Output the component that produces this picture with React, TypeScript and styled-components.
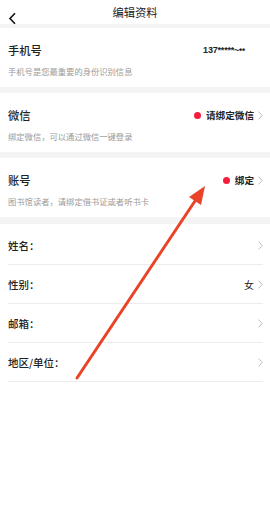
import * as React from 'react';
import styled, { createGlobalStyle } from 'styled-components';

const GlobalStyle = createGlobalStyle`
  html, body {
    margin: 0;
    padding: 0;
    background: #ffffff;
  }
  body {
    font-family: "Noto Sans CJK SC", "Liberation Sans", sans-serif;
    color: #222222;
  }
`;

const Page = styled.div`
  position: relative;
  width: 270px;
  min-height: 505px;
  background: #f4f4f4;
  display: flex;
  flex-direction: column;
  gap: 6px;
  overflow: hidden;
`;

const Header = styled.div`
  height: 24px;
  background: #ffffff;
  display: flex;
  align-items: center;
  justify-content: center;
  position: relative;
  margin-bottom: -2px;
`;

const BackButton = styled.div`
  position: absolute;
  left: 8px;
  top: 6px;
  width: 10px;
  height: 13px;
`;

const Title = styled.div`
  font-size: 11.3px;
  line-height: 16px;
  color: #222222;
`;

const Section = styled.div`
  background: #ffffff;
  padding: 14px 7px 10px 8px;
`;

const TopLine = styled.div`
  display: flex;
  align-items: center;
  justify-content: space-between;
  height: 16px;
`;

const Label = styled.div`
  font-size: 11.3px;
  line-height: 16px;
  font-weight: 500;
  color: #222222;
`;

const Sub = styled.div`
  margin-top: 7px;
  font-size: 8.3px;
  line-height: 12px;
  color: #9a9a9a;
`;

const Phone = styled.div`
  font-family: "Liberation Sans", sans-serif;
  font-size: 9px;
  font-weight: 700;
  color: #222222;
  margin-right: 18px;
  letter-spacing: -0.2px;
`;

const Right = styled.div`
  display: flex;
  align-items: center;
  gap: 4px;
`;

const Dot = styled.span`
  width: 7px;
  height: 7px;
  border-radius: 50%;
  background: #f31d3b;
  margin-right: 1px;
`;

const Status = styled.span`
  font-size: 9.6px;
  font-weight: 700;
  color: #222222;
`;

const List = styled.div`
  flex: 1;
  background: #ffffff;
  padding: 0 7px 0 8px;
  margin-top: 1px;
  padding-top: 2px;
`;

const Row = styled.div`
  height: 38px;
  display: flex;
  align-items: center;
  justify-content: space-between;
  border-bottom: 1px solid #ececec;
`;

const RowLabel = styled.div`
  font-size: 10.5px;
  font-weight: 500;
  color: #222222;
`;

const RowValue = styled.span`
  font-size: 10px;
  color: #222222;
`;

const ArrowLayer = styled.svg`
  position: absolute;
  left: 0;
  top: 0;
  pointer-events: none;
`;

const Chevron = () => (
  <svg width="5" height="9" viewBox="0 0 5 9">
    <path d="M0.6 0.6 L4.2 4.5 L0.6 8.4" fill="none" stroke="#b5b5b5" strokeWidth="0.9" />
  </svg>
);

const rows = [
  { label: '姓名：', value: '' },
  { label: '性别：', value: '女' },
  { label: '邮箱：', value: '' },
  { label: '地区/单位：', value: '' },
];

export default function App() {
  return (
    <>
      <GlobalStyle />
      <Page>
        <Header>
          <BackButton>
            <svg width="10" height="13" viewBox="0 0 10 13">
              <path d="M7 1.2 L2 6.5 L7 11.8" fill="none" stroke="#111" strokeWidth="1.6" />
            </svg>
          </BackButton>
          <Title>编辑资料</Title>
        </Header>

        <Section>
          <TopLine>
            <Label>手机号</Label>
            <Phone>137*****~••</Phone>
          </TopLine>
          <Sub>手机号是您最重要的身份识别信息</Sub>
        </Section>

        <Section>
          <TopLine>
            <Label>微信</Label>
            <Right>
              <Dot />
              <Status>请绑定微信</Status>
              <Chevron />
            </Right>
          </TopLine>
          <Sub>绑定微信，可以通过微信一键登录</Sub>
        </Section>

        <Section>
          <TopLine>
            <Label>账号</Label>
            <Right>
              <Dot />
              <Status>绑定</Status>
              <Chevron />
            </Right>
          </TopLine>
          <Sub>图书馆读者，请绑定借书证或者听书卡</Sub>
        </Section>

        <List>
          {rows.map((r) => (
            <Row key={r.label}>
              <RowLabel>{r.label}</RowLabel>
              <Right>
                {r.value && <RowValue>{r.value}</RowValue>}
                <Chevron />
              </Right>
            </Row>
          ))}
        </List>

        <ArrowLayer width="270" height="505" viewBox="0 0 270 505">
          <line x1="77" y1="378" x2="197" y2="198" stroke="#ea4329" strokeWidth="3" strokeLinecap="round" />
          <polygon points="205,186 201,205 189,197" fill="#ea4329" />
        </ArrowLayer>
      </Page>
    </>
  );
}
